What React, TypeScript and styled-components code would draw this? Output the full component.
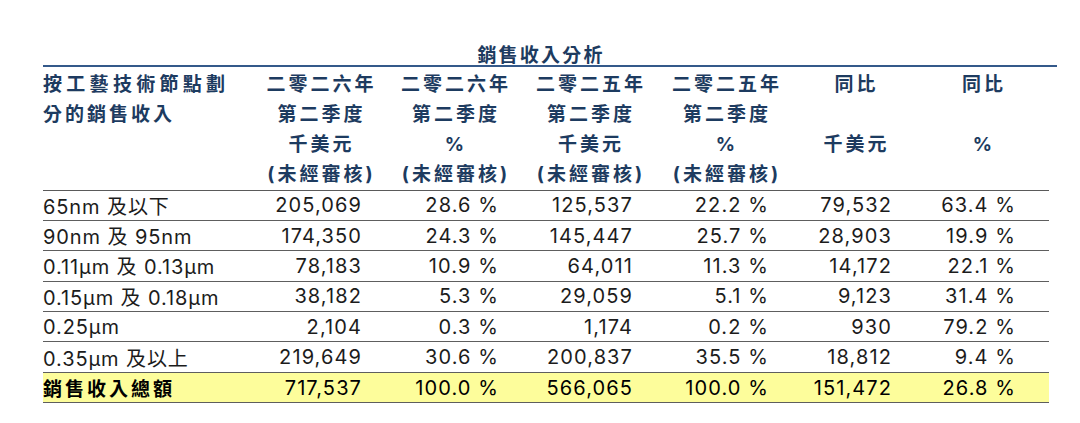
import React from "react";
import styled, { createGlobalStyle } from "styled-components";

const Global = createGlobalStyle`
  html, body { margin: 0; padding: 0; background: #ffffff; }
  body { font-family: Inter, "Noto Sans CJK TC", sans-serif; }
`;

const COLS = "210px 134px 135px 135px 137px 122px 133px";
const PAD = [0, 25, 23, 24, 25, 24, 33];

const Page = styled.div`
  padding: 41px 0 0 43px;
`;

const Title = styled.div`
  width: 1014px;
  box-sizing: border-box;
  padding-right: 18px;
  text-align: center;
  height: 26px;
  line-height: 26px;
  font-size: 19px;
  font-weight: 700;
  letter-spacing: 2.2px;
  color: #1d3b60;
  font-family: "Noto Sans CJK TC", sans-serif;
  border-bottom: 2px solid #34598a;
`;

const Table = styled.div`
  width: 1006px;
`;

const HeaderRow = styled.div`
  display: grid;
  grid-template-columns: ${COLS};
  padding-top: 2.5px;
  border-bottom: 1.5px solid #5a5a5a;
  color: #1d3b60;
  font-weight: 700;
  font-size: 19px;
  font-family: Inter, "Noto Sans CJK TC", sans-serif;
`;

const HeadCell = styled.div<{ $left?: boolean }>`
  display: flex;
  flex-direction: column;
  align-items: ${(p) => (p.$left ? "flex-start" : "center")};
`;

const HeadLine = styled.div<{ $ls?: number }>`
  height: 30px;
  line-height: 30px;
  white-space: nowrap;
  letter-spacing: ${(p) => (p.$ls ?? 3)}px;
  padding-left: ${(p) => (p.$ls ?? 3)}px;
`;

const LabelLine = styled(HeadLine)`
  padding-left: 0;
`;

const Row = styled.div<{ $total?: boolean }>`
  display: grid;
  grid-template-columns: ${COLS};
  height: 30.4px;
  box-sizing: border-box;
  align-items: center;
  border-bottom: 1.5px solid #5e5e5e;
  background: ${(p) => (p.$total ? "#fdfd9b" : "transparent")};
  color: ${(p) => (p.$total ? "#000000" : "#1c1c1c")};
  font-size: 20px;
  letter-spacing: 1.1px;
  font-family: Inter, "Noto Sans CJK TC", sans-serif;
`;

const Label = styled.div<{ $bold?: boolean }>`
  white-space: nowrap;
  font-weight: ${(p) => (p.$bold ? 700 : 400)};
  font-size: ${(p) => (p.$bold ? "19px" : "20px")};
  letter-spacing: ${(p) => (p.$bold ? "3px" : "0.9px")};
  font-family: ${(p) =>
    p.$bold ? `"Noto Sans CJK TC", sans-serif` : `Inter, "Noto Sans CJK TC", sans-serif`};
`;

const Num = styled.div<{ $pad: number }>`
  text-align: right;
  padding-right: ${(p) => p.$pad}px;
  white-space: nowrap;
`;

const headers: string[][] = [
  ["二零二六年", "第二季度", "千美元", "(未經審核)"],
  ["二零二六年", "第二季度", "%", "(未經審核)"],
  ["二零二五年", "第二季度", "千美元", "(未經審核)"],
  ["二零二五年", "第二季度", "%", "(未經審核)"],
  ["同比", "", "千美元", ""],
  ["同比", "", "%", ""],
];

const rows: string[][] = [
  ["65nm 及以下", "205,069", "28.6 %", "125,537", "22.2 %", "79,532", "63.4 %"],
  ["90nm 及 95nm", "174,350", "24.3 %", "145,447", "25.7 %", "28,903", "19.9 %"],
  ["0.11μm 及 0.13μm", "78,183", "10.9 %", "64,011", "11.3 %", "14,172", "22.1 %"],
  ["0.15μm 及 0.18μm", "38,182", "5.3 %", "29,059", "5.1 %", "9,123", "31.4 %"],
  ["0.25μm", "2,104", "0.3 %", "1,174", "0.2 %", "930", "79.2 %"],
  ["0.35μm 及以上", "219,649", "30.6 %", "200,837", "35.5 %", "18,812", "9.4 %"],
];

const total = ["銷售收入總額", "717,537", "100.0 %", "566,065", "100.0 %", "151,472", "26.8 %"];

export default function App() {
  return (
    <Page>
      <Global />
      <Title>銷售收入分析</Title>
      <Table>
        <HeaderRow>
          <HeadCell $left>
            <LabelLine $ls={4.3}>按工藝技術節點劃</LabelLine>
            <LabelLine $ls={3}>分的銷售收入</LabelLine>
          </HeadCell>
          {headers.map((h, i) => (
            <HeadCell key={i}>
              {h.map((line, j) => (
                <HeadLine key={j}>{line || "\u00a0"}</HeadLine>
              ))}
            </HeadCell>
          ))}
        </HeaderRow>
        {rows.map((r, i) => (
          <Row key={i}>
            <Label>{r[0]}</Label>
            {r.slice(1).map((v, j) => (
              <Num key={j} $pad={PAD[j + 1]}>
                {v}
              </Num>
            ))}
          </Row>
        ))}
        <Row $total>
          <Label $bold>{total[0]}</Label>
          {total.slice(1).map((v, j) => (
            <Num key={j} $pad={PAD[j + 1]}>
              {v}
            </Num>
          ))}
        </Row>
      </Table>
    </Page>
  );
}
